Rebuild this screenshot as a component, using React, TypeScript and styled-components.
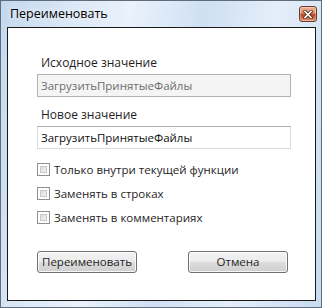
import React from "react";
import styled, { createGlobalStyle } from "styled-components";

const Global = createGlobalStyle`
  html, body { margin: 0; padding: 0; background: #fff; }
  * { box-sizing: border-box; }
`;

const font = `"Open Sans", "Noto Sans", sans-serif`;

const Window = styled.div`
  width: 322px;
  height: 308px;
  border: 1px solid #5e6c7c;
  background: linear-gradient(100deg, #c4d8ee 0%, #dbe8f6 20%, #eaf2fb 35%, #cfe0f3 55%, #e4eef9 75%, #c8dbf0 100%);
  display: flex;
  flex-direction: column;
  font-family: ${font};
  font-size: 11.5px;
  color: #000;
`;

const TitleBar = styled.div`
  height: 26px;
  display: flex;
  align-items: center;
  justify-content: space-between;
  padding: 0 4px 2px 9px;
`;

const Title = styled.div`
  font-size: 12.5px;
  color: #000;
  text-shadow: 0 0 6px rgba(255, 255, 255, 0.9);
`;

const CloseButton = styled.div`
  width: 18px;
  height: 16px;
  margin-top: 2px;
  border: 1px solid #6d3a2a;
  border-radius: 3px;
  background: linear-gradient(180deg, #eeb396 0%, #dd8e6b 45%, #bb4628 50%, #c55a38 70%, #e3966f 100%);
  display: flex;
  align-items: center;
  justify-content: center;
  box-shadow: inset 0 0 0 1px rgba(255, 255, 255, 0.35);
`;

const Client = styled.div`
  flex: 1;
  margin: 0 5px 6px 6px;
  border: 1px solid #1a1a1a;
  background: #fff;
  padding: 26px 23px 0 29px;
  display: flex;
  flex-direction: column;
`;

const FieldLabel = styled.div`
  padding-left: 4px;
  height: 18px;
  line-height: 18px;
  font-size: 12px;
  color: #1e1e1e;
`;

const TextBox = styled.div<{ $disabled?: boolean }>`
  height: 23px;
  width: 254px;
  border: 1px solid ${(p) => (p.$disabled ? "#adb2b5" : "#d5dbe1")};
  border-top-color: ${(p) => (p.$disabled ? "#adb2b5" : "#abadb3")};
  background: ${(p) => (p.$disabled ? "#f4f4f4" : "#fff")};
  color: ${(p) => (p.$disabled ? "#6d6d6d" : "#111")};
  padding-left: 3px;
  line-height: 21px;
  margin-top: 2px;
  margin-bottom: 9px;
`;

const CheckList = styled.div`
  display: flex;
  flex-direction: column;
  gap: 10px;
  margin-top: 4px;
`;

const CheckRow = styled.label`
  display: flex;
  align-items: center;
  gap: 4px;
  height: 14px;
  color: #1e1e1e;
`;

const Box = styled.span`
  width: 13px;
  height: 13px;
  border: 1px solid #8f8f8f;
  background: #fff;
  padding: 2px;
  display: inline-block;
  &::after {
    content: "";
    display: block;
    width: 100%;
    height: 100%;
    border: 1px solid #c7c7c7;
    background: linear-gradient(135deg, #dcdcdc 0%, #f2f2f2 100%);
    box-sizing: border-box;
  }
`;

const Buttons = styled.div`
  display: flex;
  justify-content: space-between;
  margin-top: 27px;
  width: 251px;
`;

const Button = styled.div`
  width: 100px;
  height: 22px;
  border: 1px solid #707070;
  border-radius: 3px;
  background: linear-gradient(180deg, #f2f2f2 0%, #ebebeb 50%, #dddddd 50%, #cfcfcf 100%);
  box-shadow: inset 0 0 0 1px rgba(255, 255, 255, 0.8);
  display: flex;
  align-items: center;
  justify-content: center;
  color: #1e1e1e;
  padding-bottom: 1px;
`;

const CloseIcon = () => (
  <svg width="10" height="9" viewBox="0 0 10 9">
    <path d="M2 1.5 L8 7.5 M8 1.5 L2 7.5" stroke="#5a2a1c" strokeWidth="3.2" strokeLinecap="square" />
    <path d="M2 1.5 L8 7.5 M8 1.5 L2 7.5" stroke="#ffffff" strokeWidth="1.6" strokeLinecap="square" />
  </svg>
);

const options = [
  "Только внутри текущей функции",
  "Заменять в строках",
  "Заменять в комментариях",
];

export default function App() {
  return (
    <>
      <Global />
      <Window>
        <TitleBar>
          <Title>Переименовать</Title>
          <CloseButton>
            <CloseIcon />
          </CloseButton>
        </TitleBar>
        <Client>
          <FieldLabel>Исходное значение</FieldLabel>
          <TextBox $disabled>ЗагрузитьПринятыеФайлы</TextBox>
          <FieldLabel>Новое значение</FieldLabel>
          <TextBox>ЗагрузитьПринятыеФайлы</TextBox>
          <CheckList>
            {options.map((o) => (
              <CheckRow key={o}>
                <Box />
                {o}
              </CheckRow>
            ))}
          </CheckList>
          <Buttons>
            <Button>Переименовать</Button>
            <Button>Отмена</Button>
          </Buttons>
        </Client>
      </Window>
    </>
  );
}
